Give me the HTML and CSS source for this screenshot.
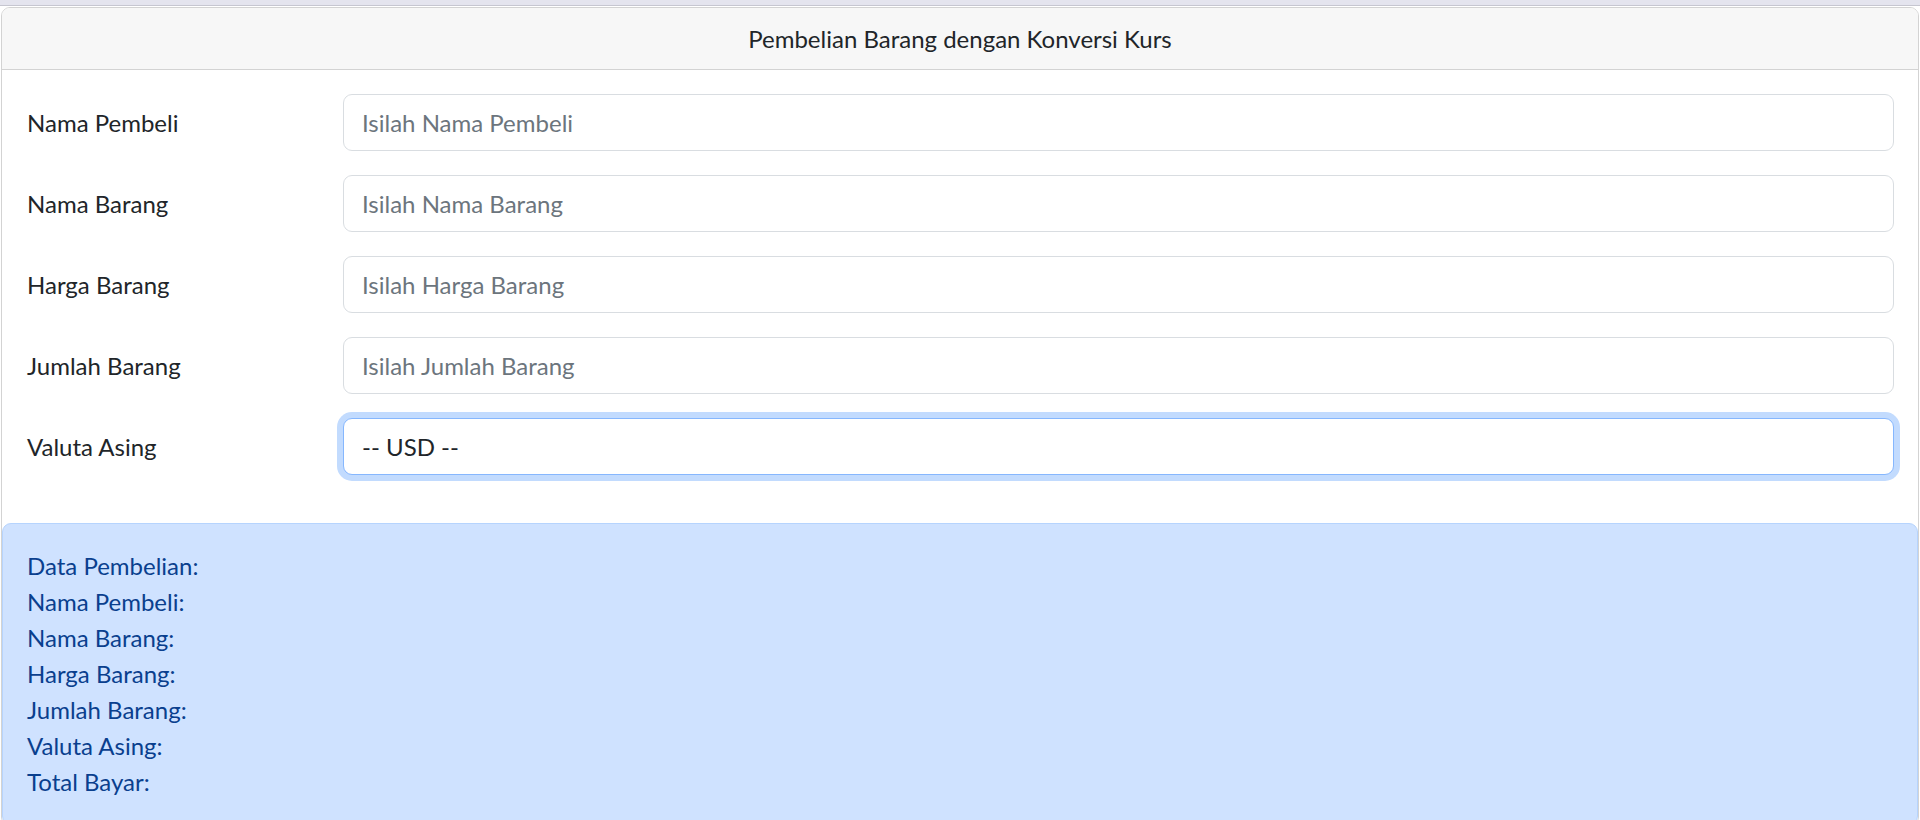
FILE: index.html
```html
<!DOCTYPE html>
<html lang="id">
<head>
<meta charset="utf-8">
<title>Pembelian Barang dengan Konversi Kurs</title>
<link rel="stylesheet" href="styles.css">
</head>
<body>
<div class="topbar"></div>
<div class="card">
  <div class="card-header">Pembelian Barang dengan Konversi Kurs</div>
  <form class="card-body">
    <div class="form-row">
      <label class="form-label" for="pembeli">Nama Pembeli</label>
      <input class="form-control" id="pembeli" type="text" placeholder="Isilah Nama Pembeli">
    </div>
    <div class="form-row">
      <label class="form-label" for="barang">Nama Barang</label>
      <input class="form-control" id="barang" type="text" placeholder="Isilah Nama Barang">
    </div>
    <div class="form-row">
      <label class="form-label" for="harga">Harga Barang</label>
      <input class="form-control" id="harga" type="text" placeholder="Isilah Harga Barang">
    </div>
    <div class="form-row">
      <label class="form-label" for="jumlah">Jumlah Barang</label>
      <input class="form-control" id="jumlah" type="text" placeholder="Isilah Jumlah Barang">
    </div>
    <div class="form-row">
      <label class="form-label" for="valuta">Valuta Asing</label>
      <select class="form-control form-select is-focused" id="valuta">
        <option>-- USD --</option>
      </select>
    </div>
  </form>
  <div class="alert">
    <div class="alert-line">Data Pembelian:</div>
    <div class="alert-line">Nama Pembeli:</div>
    <div class="alert-line">Nama Barang:</div>
    <div class="alert-line">Harga Barang:</div>
    <div class="alert-line">Jumlah Barang:</div>
    <div class="alert-line">Valuta Asing:</div>
    <div class="alert-line">Total Bayar:</div>
  </div>
</div>
</body>
</html>
```
FILE: styles.css
```css
html, body {
  margin: 0;
  padding: 0;
  height: 820px;
  overflow: hidden;
  background: #ffffff;
}

body {
  font-family: Lato, "Open Sans", sans-serif;
  font-size: 24px;
  line-height: 36px;
  color: #212529;
}

.topbar {
  height: 5px;
  background: #e4e4ee;
  border-bottom: 1px solid #c6c6d0;
  margin-bottom: 1px;
}

.card {
  margin: 0 1px 0 1px;
  border: 1px solid #d3d3d3;
  border-radius: 9px;
  background: #ffffff;
  overflow: hidden;
}

.card-header {
  background: #f7f7f7;
  border-bottom: 1px solid #d3d3d3;
  padding: 13px 24px 12px 24px;
  text-align: center;
  color: #212529;
}

.card-body {
  display: flex;
  flex-direction: column;
  gap: 24px;
  padding: 24px 24px 48px 24px;
  margin: 0;
}

.form-row {
  display: grid;
  grid-template-columns: 317px 1fr;
  align-items: center;
}

.form-label {
  padding-left: 1px;
  color: #212529;
}

.form-control {
  box-sizing: border-box;
  width: 100%;
  height: 57px;
  margin: 0;
  padding: 0 18px;
  border: 1px solid #d9dde1;
  border-radius: 9px;
  background: #ffffff;
  font-family: inherit;
  font-size: 24px;
  line-height: 36px;
  color: #212529;
  outline: none;
}

.form-control::placeholder {
  color: #6c757d;
  opacity: 1;
}

.form-select {
  appearance: none;
  -webkit-appearance: none;
}

.form-control.is-focused {
  border-color: #86b7fe;
  box-shadow: 0 0 0 6px #c2dbfe;
}

.alert {
  border: 1px solid #b6d4fe;
  border-radius: 9px;
  background: #cfe2ff;
  color: #0a3f8e;
  padding: 24px 24px;
  margin: 0;
}

.alert-line {
  line-height: 36px;
}
```
